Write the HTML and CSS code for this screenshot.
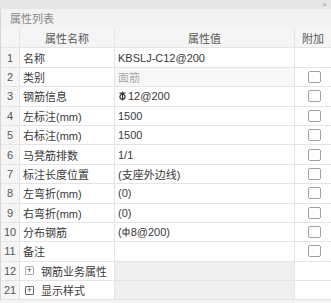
FILE: index.html
```html
<!DOCTYPE html>
<html lang="zh-CN">
<head>
    <meta charset="UTF-8">
    <title>属性列表</title>
    <link rel="stylesheet" href="styles.css">
</head>
<body>
    <div class="panel">
        <div class="topbar"><span class="close">×</span></div>
        <div class="title">属性列表</div>
        <div class="grid">
            <div class="row head">
                <div class="cell num"></div>
                <div class="cell name center">属性名称</div>
                <div class="cell value center">属性值</div>
                <div class="cell attach center">附加</div>
            </div>
            <div class="row">
                <div class="cell num">1</div>
                <div class="cell name">名称</div>
                <div class="cell value">KBSLJ-C12@200</div>
                <div class="cell attach"></div>
            </div>
            <div class="row">
                <div class="cell num">2</div>
                <div class="cell name">类别</div>
                <div class="cell value readonly">面筋</div>
                <div class="cell attach"><span class="check"></span></div>
            </div>
            <div class="row">
                <div class="cell num">3</div>
                <div class="cell name">钢筋信息</div>
                <div class="cell value"><svg class="rebar" width="9" height="10" viewBox="0 0 9 10"><path d="M1.5 2.2h6M4.5 0.8v8.6M4.5 3.2a2.6 2.6 0 1 0 0.01 0" fill="none" stroke="#3a3a3a" stroke-width="1.3"/></svg>12@200</div>
                <div class="cell attach"><span class="check"></span></div>
            </div>
            <div class="row">
                <div class="cell num">4</div>
                <div class="cell name">左标注(mm)</div>
                <div class="cell value">1500</div>
                <div class="cell attach"><span class="check"></span></div>
            </div>
            <div class="row">
                <div class="cell num">5</div>
                <div class="cell name">右标注(mm)</div>
                <div class="cell value">1500</div>
                <div class="cell attach"><span class="check"></span></div>
            </div>
            <div class="row">
                <div class="cell num">6</div>
                <div class="cell name">马凳筋排数</div>
                <div class="cell value">1/1</div>
                <div class="cell attach"><span class="check"></span></div>
            </div>
            <div class="row">
                <div class="cell num">7</div>
                <div class="cell name">标注长度位置</div>
                <div class="cell value">(支座外边线)</div>
                <div class="cell attach"><span class="check"></span></div>
            </div>
            <div class="row">
                <div class="cell num">8</div>
                <div class="cell name">左弯折(mm)</div>
                <div class="cell value">(0)</div>
                <div class="cell attach"><span class="check"></span></div>
            </div>
            <div class="row">
                <div class="cell num">9</div>
                <div class="cell name">右弯折(mm)</div>
                <div class="cell value">(0)</div>
                <div class="cell attach"><span class="check"></span></div>
            </div>
            <div class="row">
                <div class="cell num">10</div>
                <div class="cell name">分布钢筋</div>
                <div class="cell value">(<svg class="rebar" width="8" height="10" viewBox="0 0 8 10"><path d="M4 0.5v9M1 3h6v4H1z" fill="none" stroke="#3a3a3a" stroke-width="1"/></svg>8@200)</div>
                <div class="cell attach"><span class="check"></span></div>
            </div>
            <div class="row">
                <div class="cell num">11</div>
                <div class="cell name">备注</div>
                <div class="cell value"></div>
                <div class="cell attach"><span class="check"></span></div>
            </div>
            <div class="row">
                <div class="cell num">12</div>
                <div class="cell name"><span class="expand light">+</span>钢筋业务属性</div>
                <div class="cell value group"></div>
                <div class="cell attach"></div>
            </div>
            <div class="row">
                <div class="cell num">21</div>
                <div class="cell name"><span class="expand">+</span>显示样式</div>
                <div class="cell value group"></div>
                <div class="cell attach"></div>
            </div>
        </div>
    </div>
</body>
</html>
```

FILE: styles.css
```css
* {
    margin: 0;
    padding: 0;
    box-sizing: border-box;
}

body {
    background: #f3f3f3;
    font-family: 'Liberation Sans', 'Noto Sans CJK SC', sans-serif;
    font-size: 11px;
    color: #3a3a3a;
}

.panel {
    width: 331px;
    height: 303px;
    overflow: hidden;
}

.topbar {
    height: 9px;
    background: #e6e6e6;
    display: flex;
    justify-content: flex-end;
    align-items: center;
}

.close {
    font-size: 8px;
    line-height: 9px;
    color: #999;
    padding-right: 4px;
}

.title {
    height: 20px;
    line-height: 20px;
    padding-left: 9px;
    color: #888;
    background: #f2f2f2;
    border-left: 1px solid #d6d6d6;
}

.grid {
    border-left: 1px solid #d6d6d6;
    background: #fff;
}

.row {
    display: grid;
    grid-template-columns: 19px 95px 180px 1fr;
    height: 19.4px;
}

.cell {
    display: flex;
    align-items: center;
    border-right: 1px solid #e4e4e4;
    border-bottom: 1px solid #e4e4e4;
    padding-left: 3px;
    white-space: nowrap;
    overflow: hidden;
}

.head .cell {
    background: #f5f5f5;
    color: #555;
}

.center {
    justify-content: center;
    padding-left: 0;
}

.num {
    justify-content: center;
    padding-left: 0;
    background: #f5f5f5;
    color: #555;
}

.value.readonly {
    color: #aaa;
    background: #f7f7f7;
}

.value.group {
    background: #efefef;
}

.attach {
    justify-content: center;
    padding-left: 0;
    border-right: none;
}

.check {
    width: 13px;
    height: 12px;
    border: 1px solid #a0a0a0;
    border-radius: 2px;
    background: #fff;
    margin-left: 2px;
}

.rebar {
    margin-right: 1px;
}

.expand {
    width: 9px;
    height: 9px;
    border: 1px solid #666;
    border-radius: 1px;
    display: flex;
    align-items: center;
    justify-content: center;
    font-size: 9px;
    line-height: 7px;
    color: #444;
    margin: 0 7px 0 2px;
}

.expand.light {
    border-color: #aaa;
}
```
